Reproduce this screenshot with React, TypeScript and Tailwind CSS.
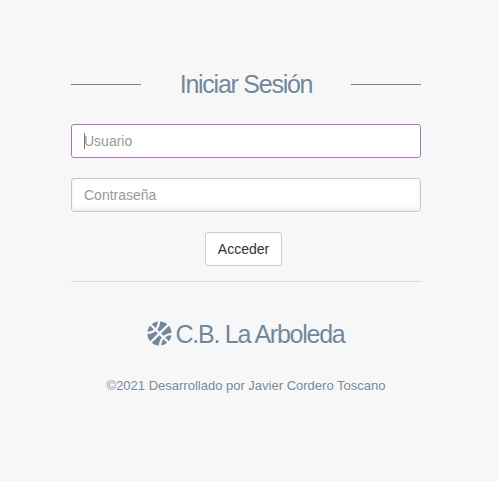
import React from "react";
import { FaBasketballBall } from "react-icons/fa";

const fieldClass =
  "block h-[34px] w-full rounded-[3px] border bg-white px-3 text-[14px] text-[#555] placeholder:text-[#999] placeholder:opacity-100 outline-none";

export default function App() {
  return (
    <main className="min-h-screen bg-[#f7f7f7] pt-[74px] font-['Liberation_Sans',Arial,sans-serif] text-[#73879c]">
      <form className="ml-[71px] w-[350px]" onSubmit={(e) => e.preventDefault()}>
        <div className="flex h-5 items-center justify-between">
          <span className="h-px w-[70px] bg-[#7e7e7e]" />
          <h1 className="whitespace-nowrap text-[25px] leading-5 tracking-[-1.25px] [text-shadow:0_1px_0_#fff]">
            Iniciar Sesión
          </h1>
          <span className="h-px w-[70px] bg-[#7e7e7e]" />
        </div>
        <div className="mt-[30px] flex h-[34px] w-full items-center rounded-[3px] border border-[#aa77b4] bg-white px-3 text-[14px] text-[#999]">
          <span className="h-4 w-px bg-[#777]" />
          <span className="-ml-px">Usuario</span>
        </div>
        <input
          type="password"
          placeholder="Contraseña"
          className={`${fieldClass} mt-5 border-[#c8c8c8] shadow-[0_1px_0_#fff,inset_0_-2px_5px_rgba(0,0,0,0.08)]`}
        />
        <div className="mt-5 flex justify-center pr-[5px]">
          <button className="h-[34px] w-[77px] rounded-[3px] border border-[#ccc] bg-white text-[14px] text-[#333]">
            Acceder
          </button>
        </div>
        <footer className="mt-[15px] border-t border-[#d8d8d8] text-center [text-shadow:0_1px_0_#fff]">
          <h1 className="mt-[42px] flex h-5 items-center justify-center whitespace-nowrap text-[25px] leading-5 tracking-[-1.25px]">
            <FaBasketballBall className="mr-[3px] mb-0.5 size-[25px] shrink-0" />
            C.B. La Arboleda
          </h1>
          <p className="mt-8 text-[13px] leading-5">©2021 Desarrollado por Javier Cordero Toscano</p>
        </footer>
      </form>
    </main>
  );
}
